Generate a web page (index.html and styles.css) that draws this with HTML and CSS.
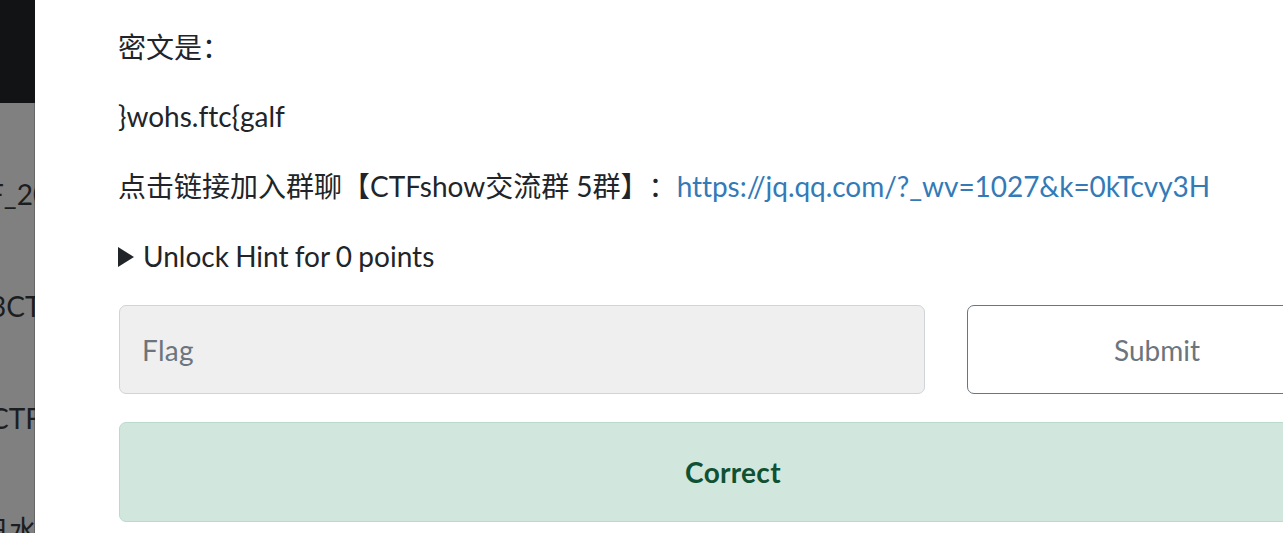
FILE: index.html
```html
<!DOCTYPE html>
<html lang="zh">
<head>
<meta charset="utf-8">
<title>Challenge</title>
<link rel="stylesheet" href="styles.css">
</head>
<body>
<aside class="backdrop">
  <div class="navbar"></div>
  <p class="peek peek-a">F_20</p>
  <p class="peek peek-b">3CTF</p>
  <p class="peek peek-c">CTF</p>
  <p class="peek peek-d">日水</p>
</aside>
<main class="modal">
  <p class="line line-first">密文是：</p>
  <p class="line">}wohs.ftc{galf</p>
  <p class="line">点击链接加入群聊【CTFshow交流群 5群】：<a class="link" href="#">https://jq.qq.com/?_wv=1027&amp;k=0kTcvy3H</a></p>
  <div class="hint"><svg class="arrow" viewBox="0 0 16 20"><path d="M0 0 16 10 0 20Z"/></svg><span>Unlock Hint for 0 points</span></div>
  <form class="entry">
    <input class="flag" placeholder="Flag" aria-label="Flag">
    <button class="submit" type="button">Submit</button>
  </form>
  <div class="alert">Correct</div>
</main>
</body>
</html>
```
FILE: styles.css
```css
* { box-sizing: border-box; }
body {
  margin: 0;
  width: 1283px;
  height: 533px;
  overflow: hidden;
  display: flex;
  background: #fff;
  color: #212529;
  font: 28px/42px Lato, "Noto Sans CJK SC", sans-serif;
  font-variant-ligatures: none;
  text-spacing-trim: space-all;
}
.backdrop {
  flex: 0 0 35px;
  height: 533px;
  overflow: hidden;
  background: #808080;
  box-shadow: inset -1px 0 #666;
  color: #1b1e21;
}
.navbar { height: 103px; background: #111315; }
.peek { margin: 0 0 70px -10px; white-space: nowrap; }
.peek-a { margin-top: 70px; margin-left: -12px; }
.peek-d { margin-left: -19px; }
.modal { flex: none; width: 1248px; overflow: hidden; padding: 25px 0 0 83px; }
.line { margin: 0 0 28px; white-space: nowrap; }
.line-first { padding-top: 1px; margin-bottom: 27px; }
.link { color: #337ab7; text-decoration: none; letter-spacing: -0.05px; }
.hint { display: flex; align-items: center; gap: 9px; word-spacing: -0.9px; }
.arrow { width: 16px; height: 20px; margin-top: 2px; fill: #212529; }
.entry { display: flex; gap: 42px; margin: 28px 0 28px 1px; }
.flag {
  flex: none;
  width: 806px;
  height: 89px;
  padding: 0 22px;
  border: 1px solid #ced4da;
  border-radius: 7px;
  background: #efefef;
  font: inherit;
}
.flag::placeholder { color: #6c757d; opacity: 1; letter-spacing: 0.3px; }
.submit {
  flex: none;
  width: 380px;
  height: 89px;
  border: 1px solid #6c757d;
  border-radius: 7px;
  background: #fff;
  color: #6c757d;
  font: inherit;
}
.alert {
  width: 1228px;
  height: 100px;
  margin-left: 1px;
  line-height: 98px;
  border: 1px solid #badbcc;
  border-radius: 7px;
  background: #d1e7dd;
  color: #0f5132;
  font-weight: 700;
  letter-spacing: 0.3px;
  text-align: center;
}
```
